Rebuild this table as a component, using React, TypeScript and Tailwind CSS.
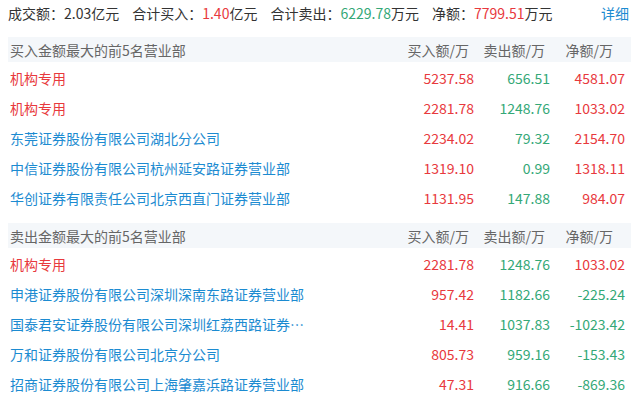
import React from "react";

const RED = "text-[#e8393d]";
const GREEN = "text-[#34a877]";
const BLUE = "text-[#1c8bd1]";

type Row = { name: string; inst?: boolean; buy: string; sell: string; net: string };

const buyRows: Row[] = [
  { name: "机构专用", inst: true, buy: "5237.58", sell: "656.51", net: "4581.07" },
  { name: "机构专用", inst: true, buy: "2281.78", sell: "1248.76", net: "1033.02" },
  { name: "东莞证券股份有限公司湖北分公司", buy: "2234.02", sell: "79.32", net: "2154.70" },
  { name: "中信证券股份有限公司杭州延安路证券营业部", buy: "1319.10", sell: "0.99", net: "1318.11" },
  { name: "华创证券有限责任公司北京西直门证券营业部", buy: "1131.95", sell: "147.88", net: "984.07" },
];

const sellRows: Row[] = [
  { name: "机构专用", inst: true, buy: "2281.78", sell: "1248.76", net: "1033.02" },
  { name: "申港证券股份有限公司深圳深南东路证券营业部", buy: "957.42", sell: "1182.66", net: "-225.24" },
  { name: "国泰君安证券股份有限公司深圳红荔西路证券营业部", buy: "14.41", sell: "1037.83", net: "-1023.42" },
  { name: "万和证券股份有限公司北京分公司", buy: "805.73", sell: "959.16", net: "-153.43" },
  { name: "招商证券股份有限公司上海肇嘉浜路证券营业部", buy: "47.31", sell: "916.66", net: "-869.36" },
];

function Header({ title }: { title: string }) {
  return (
    <div className="ml-2 flex h-[25px] items-center bg-[#f4f7fa] text-[#666]">
      <div className="min-w-0 flex-1 pl-[2px]">{title}</div>
      <div className="w-[90px] whitespace-nowrap pr-[5px] text-right">买入额/万</div>
      <div className="w-[76px] whitespace-nowrap pr-[5px] text-right">卖出额/万</div>
      <div className="w-[81px] whitespace-nowrap pr-[18px] text-right">净额/万</div>
    </div>
  );
}

function DataRow({ r }: { r: Row }) {
  const netNeg = r.net.startsWith("-");
  return (
    <div className="ml-2 flex h-[30px] items-center">
      <div className={`min-w-0 flex-1 pl-[2px] pr-[78px]`}>
        <div className={`truncate leading-[20px] ${r.inst ? RED : BLUE}`}>{r.name}</div>
      </div>
      <div className={`w-[90px] text-right ${RED}`}>{r.buy}</div>
      <div className={`w-[76px] text-right ${GREEN}`}>{r.sell}</div>
      <div className={`w-[81px] pr-[6px] text-right ${netNeg ? GREEN : RED}`}>{r.net}</div>
    </div>
  );
}

export default function App() {
  return (
    <div
      className="h-[398px] w-[631px] overflow-hidden bg-white text-[14px] leading-none text-[#333]"
      style={{ fontFamily: '"Noto Sans CJK SC", "Noto Sans", sans-serif' }}
    >
      <div className="flex h-[25px] items-center whitespace-nowrap pl-2 pr-[2px]">
        <span>成交额：2.03亿元</span>
        <span className="ml-[13px]">
          合计买入：<span className={RED}>1.40</span>亿元
        </span>
        <span className="ml-[13px]">
          合计卖出：<span className={GREEN}>6229.78</span>万元
        </span>
        <span className="ml-[13px]">
          净额：<span className={RED}>7799.51</span>万元
        </span>
        <span className={`ml-auto ${BLUE}`}>详细</span>
      </div>
      <div className="h-[12px]" />
      <Header title="买入金额最大的前5名营业部" />
      <div className="pt-[1px]">
        {buyRows.map((r, i) => (
          <DataRow key={i} r={r} />
        ))}
      </div>
      <div className="h-[10px]" />
      <Header title="卖出金额最大的前5名营业部" />
      <div className="pt-[1px]">
        {sellRows.map((r, i) => (
          <DataRow key={i} r={r} />
        ))}
      </div>
    </div>
  );
}
